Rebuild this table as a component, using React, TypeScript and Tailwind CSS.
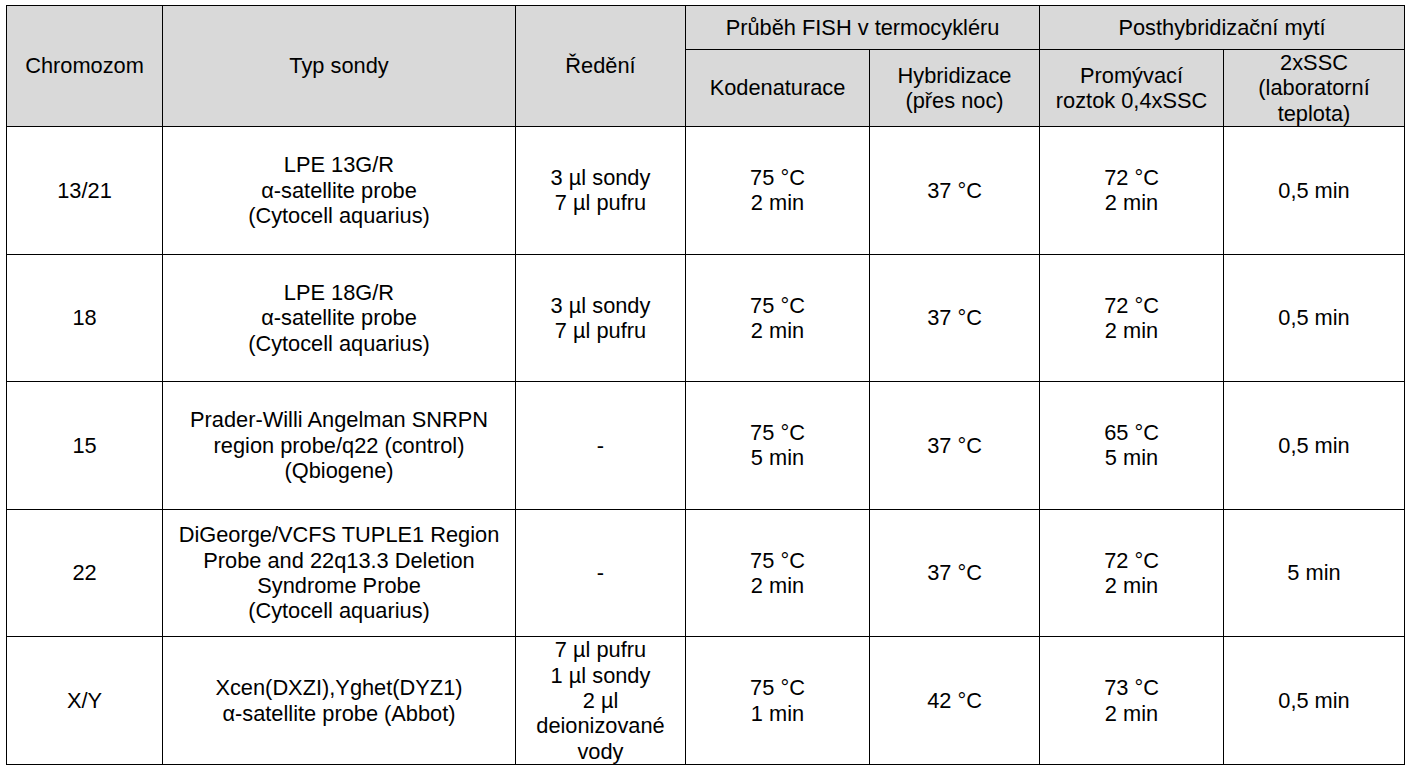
const rows = [
  {
    chrom: "13/21",
    probe: ["LPE 13G/R", "α-satellite probe", "(Cytocell aquarius)"],
    dilution: ["3 µl sondy", "7 µl pufru"],
    codenat: ["75 °C", "2 min"],
    hybrid: ["37 °C"],
    wash: ["72 °C", "2 min"],
    ssc: ["0,5 min"],
  },
  {
    chrom: "18",
    probe: ["LPE 18G/R", "α-satellite probe", "(Cytocell aquarius)"],
    dilution: ["3 µl sondy", "7 µl pufru"],
    codenat: ["75 °C", "2 min"],
    hybrid: ["37 °C"],
    wash: ["72 °C", "2 min"],
    ssc: ["0,5 min"],
  },
  {
    chrom: "15",
    probe: ["Prader-Willi Angelman SNRPN", "region probe/q22 (control)", "(Qbiogene)"],
    dilution: ["-"],
    codenat: ["75 °C", "5 min"],
    hybrid: ["37 °C"],
    wash: ["65 °C", "5 min"],
    ssc: ["0,5 min"],
  },
  {
    chrom: "22",
    probe: [
      "DiGeorge/VCFS TUPLE1 Region",
      "Probe and 22q13.3 Deletion",
      "Syndrome Probe",
      "(Cytocell aquarius)",
    ],
    dilution: ["-"],
    codenat: ["75 °C", "2 min"],
    hybrid: ["37 °C"],
    wash: ["72 °C", "2 min"],
    ssc: ["5 min"],
  },
  {
    chrom: "X/Y",
    probe: ["Xcen(DXZI),Yghet(DYZ1)", "α-satellite probe (Abbot)"],
    dilution: ["7 µl pufru", "1 µl sondy", "2 µl", "deionizované", "vody"],
    codenat: ["75 °C", "1 min"],
    hybrid: ["42 °C"],
    wash: ["73 °C", "2 min"],
    ssc: ["0,5 min"],
  },
];

function Lines({ lines }: { lines: string[] }) {
  return (
    <>
      {lines.map((l, i) => (
        <div key={i}>{l}</div>
      ))}
    </>
  );
}

const cell = "border border-black text-center align-middle p-0";
const head = "border border-black text-center align-middle p-0 bg-[#d9d9d9]";

export default function App() {
  return (
    <div
      className="w-[1408px] h-[768px] bg-white text-black pl-[6px] pt-[5px]"
      style={{ fontFamily: '"Liberation Sans", Arial, sans-serif' }}
    >
      <table className="border-collapse table-fixed text-[21.8px] leading-[25.4px] w-[1398px]">
        <colgroup>
          <col className="w-[156px]" />
          <col className="w-[353px]" />
          <col className="w-[170px]" />
          <col className="w-[184px]" />
          <col className="w-[170px]" />
          <col className="w-[184px]" />
          <col className="w-[181px]" />
        </colgroup>
        <thead>
          <tr className="h-[44px]">
            <th rowSpan={2} className={head + " font-normal"}>Chromozom</th>
            <th rowSpan={2} className={head + " font-normal"}>Typ sondy</th>
            <th rowSpan={2} className={head + " font-normal"}>Ředění</th>
            <th colSpan={2} className={head + " font-normal"}>Průběh FISH v termocykléru</th>
            <th colSpan={2} className={head + " font-normal"}>Posthybridizační mytí</th>
          </tr>
          <tr className="h-[77px]">
            <th className={head + " font-normal"}>Kodenaturace</th>
            <th className={head + " font-normal"}>
              <Lines lines={["Hybridizace", "(přes noc)"]} />
            </th>
            <th className={head + " font-normal"}>
              <Lines lines={["Promývací", "roztok 0,4xSSC"]} />
            </th>
            <th className={head + " font-normal"}>
              <Lines lines={["2xSSC", "(laboratorní", "teplota)"]} />
            </th>
          </tr>
        </thead>
        <tbody>
          {rows.map((r) => (
            <tr key={r.chrom} className="h-[127.5px]">
              <td className={cell}>{r.chrom}</td>
              <td className={cell}>
                <Lines lines={r.probe} />
              </td>
              <td className={cell}>
                <Lines lines={r.dilution} />
              </td>
              <td className={cell}>
                <Lines lines={r.codenat} />
              </td>
              <td className={cell}>
                <Lines lines={r.hybrid} />
              </td>
              <td className={cell}>
                <Lines lines={r.wash} />
              </td>
              <td className={cell}>
                <Lines lines={r.ssc} />
              </td>
            </tr>
          ))}
        </tbody>
      </table>
    </div>
  );
}
